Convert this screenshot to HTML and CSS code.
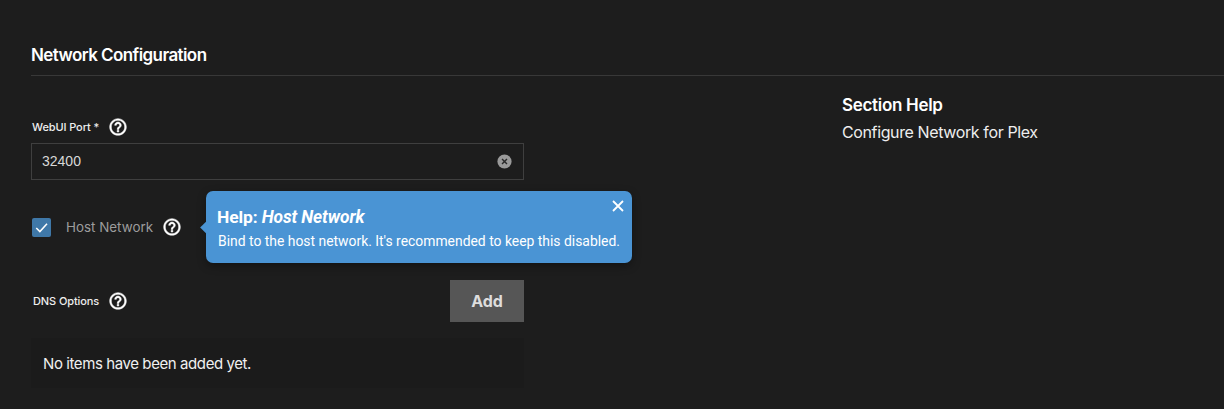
FILE: index.html
```html
<!DOCTYPE html>
<html lang="en">
<head>
  <meta charset="UTF-8">
  <title>Network Configuration</title>
  <link rel="stylesheet" href="styles.css">
</head>
<body>

<header class="section-head">
  <h2>Network Configuration</h2>
</header>

<main class="columns">
  <form class="fields">
    <div class="field">
      <div class="label-row">
        <label>WebUI Port *</label>
        <svg class="help-icon" viewBox="0 0 24 24"><use href="#help"/></svg>
      </div>
      <div class="input-box">
        <span class="input-value">32400</span>
        <svg class="clear-icon" viewBox="0 0 24 24"><path d="M12 2a10 10 0 1 0 0 20 10 10 0 0 0 0-20z" fill="#9a9a9a"/><path d="M8.5 8.5l7 7M15.5 8.5l-7 7" stroke="#2a2a2a" stroke-width="2" fill="none"/></svg>
      </div>
    </div>

    <div class="check-row">
      <span class="checkbox">
        <svg viewBox="0 0 20 20"><path d="M4.5 10.5l3.8 3.8 7.5-8.3" stroke="#fff" stroke-width="1.6" fill="none"/></svg>
      </span>
      <span class="check-label">Host Network</span>
      <svg class="help-icon" viewBox="0 0 24 24"><use href="#help"/></svg>

      <div class="tooltip">
        <svg class="tooltip-close" viewBox="0 0 14 14"><path d="M2 2l10 10M12 2L2 12" stroke="#fff" stroke-width="1.8" fill="none"/></svg>
        <h4>Help: <em>Host Network</em></h4>
        <p>Bind to the host network. It's recommended to keep this disabled.</p>
      </div>
    </div>

    <div class="list-head">
      <div class="label-row">
        <label class="dns-label">DNS Options</label>
        <svg class="help-icon" viewBox="0 0 24 24"><use href="#help"/></svg>
      </div>
      <button type="button" class="add-btn">Add</button>
    </div>
    <div class="empty-list">No items have been added yet.</div>
  </form>

  <aside class="section-help">
    <h3>Section Help</h3>
    <p>Configure Network for Plex</p>
  </aside>
</main>

<svg class="icon-defs" width="0" height="0">
  <symbol id="help" viewBox="0 0 24 24">
    <path fill="#fff" stroke="#fff" stroke-width="0.6" d="M11 18h2v-2h-2v2zm1-16C6.48 2 2 6.48 2 12s4.48 10 10 10 10-4.48 10-10S17.52 2 12 2zm0 18c-4.41 0-8-3.59-8-8s3.59-8 8-8 8 3.59 8 8-3.59 8-8 8zm0-14c-2.21 0-4 1.79-4 4h2c0-1.1.9-2 2-2s2 .9 2 2c0 2-3 1.75-3 5h2c0-2.25 3-2.5 3-5 0-2.21-1.79-4-4-4z"/>
  </symbol>
</svg>

</body>
</html>
```

FILE: styles.css
```css
html, body {
  height: 100%;
}
body {
  margin: 0;
  padding-left: 31px;
  background: #1d1d1d;
  color: #fff;
  font-family: Inter, "Noto Sans", sans-serif;
  overflow: hidden;
}
.icon-defs {
  display: none;
}

.section-head {
  height: 76px;
  border-bottom: 1px solid #383838;
  box-sizing: border-box;
  padding-top: 44px;
}
.section-head h2 {
  margin: 0;
  font-size: 17px;
  line-height: 22px;
  font-weight: 600;
  letter-spacing: -0.58px;
}

.columns {
  display: flex;
}
.fields {
  width: 493px;
  padding-top: 41px;
}

.label-row {
  display: flex;
  align-items: center;
  height: 20px;
  gap: 9px;
}
.label-row label {
  font-size: 11px;
  font-weight: 500;
  color: #eee;
  letter-spacing: -0.1px;
  padding-left: 1px;
}
.label-row .dns-label {
  padding-left: 2px;
}
.help-icon {
  width: 20px;
  height: 20px;
  display: block;
}

.input-box {
  display: flex;
  align-items: center;
  justify-content: space-between;
  height: 37px;
  margin-top: 6px;
  padding: 0 10px 1px;
  box-sizing: border-box;
  border: 1px solid #3f3f3f;
}
.input-value {
  font-family: "Liberation Sans", sans-serif;
  font-size: 14px;
  color: #d8d8d8;
}
.clear-icon {
  width: 17px;
  height: 17px;
  display: block;
}

.check-row {
  position: relative;
  display: flex;
  align-items: center;
  height: 38px;
  margin-top: 28px;
  padding-left: 1px;
}
.checkbox {
  display: block;
  width: 19px;
  height: 19px;
  background: #3f78a8;
  border-radius: 2px;
}
.checkbox svg {
  display: block;
}
.check-label {
  margin-left: 15px;
  margin-right: 9px;
  font-size: 13.4px;
  color: #9c9c9c;
}

.tooltip {
  position: absolute;
  left: 175px;
  top: -17px;
  width: 426px;
  height: 72px;
  box-sizing: border-box;
  padding: 16px 11px 0 11px;
  background: #4a94d4;
  border-radius: 7px;
  box-shadow: 0 3px 8px rgba(0, 0, 0, 0.35);
  font-family: Roboto, sans-serif;
}
.tooltip::before {
  content: "";
  position: absolute;
  left: -4px;
  top: 32px;
  width: 9px;
  height: 9px;
  background: #4a94d4;
  transform: rotate(45deg);
}
.tooltip-close {
  position: absolute;
  right: 7px;
  top: 8px;
  width: 14px;
  height: 14px;
}
.tooltip h4 {
  margin: 0;
  font-size: 17.4px;
  line-height: 20px;
  font-weight: 700;
  letter-spacing: -0.1px;
}
.tooltip p {
  margin: 5px 0 0 1px;
  font-size: 13.9px;
  line-height: 18px;
  white-space: nowrap;
}

.list-head {
  display: flex;
  align-items: center;
  justify-content: space-between;
  margin-top: 34px;
  height: 42px;
}
.add-btn {
  width: 74px;
  height: 42px;
  border: none;
  background: #565656;
  color: #ddd;
  font-family: Inter, sans-serif;
  font-size: 16px;
  font-weight: 700;
}
.empty-list {
  height: 50px;
  margin-top: 16px;
  padding-left: 12px;
  display: flex;
  align-items: center;
  background: #1b1b1b;
  font-size: 15px;
  color: #f0f0f0;
  letter-spacing: -0.41px;
}

.section-help {
  margin-left: 318px;
  padding-top: 18px;
}
.section-help h3 {
  margin: 0;
  font-size: 17px;
  line-height: 22px;
  font-weight: 600;
  letter-spacing: -0.3px;
}
.section-help p {
  margin: 6px 0 0;
  font-size: 16px;
  line-height: 20px;
  color: #eee;
  letter-spacing: -0.38px;
}
```
